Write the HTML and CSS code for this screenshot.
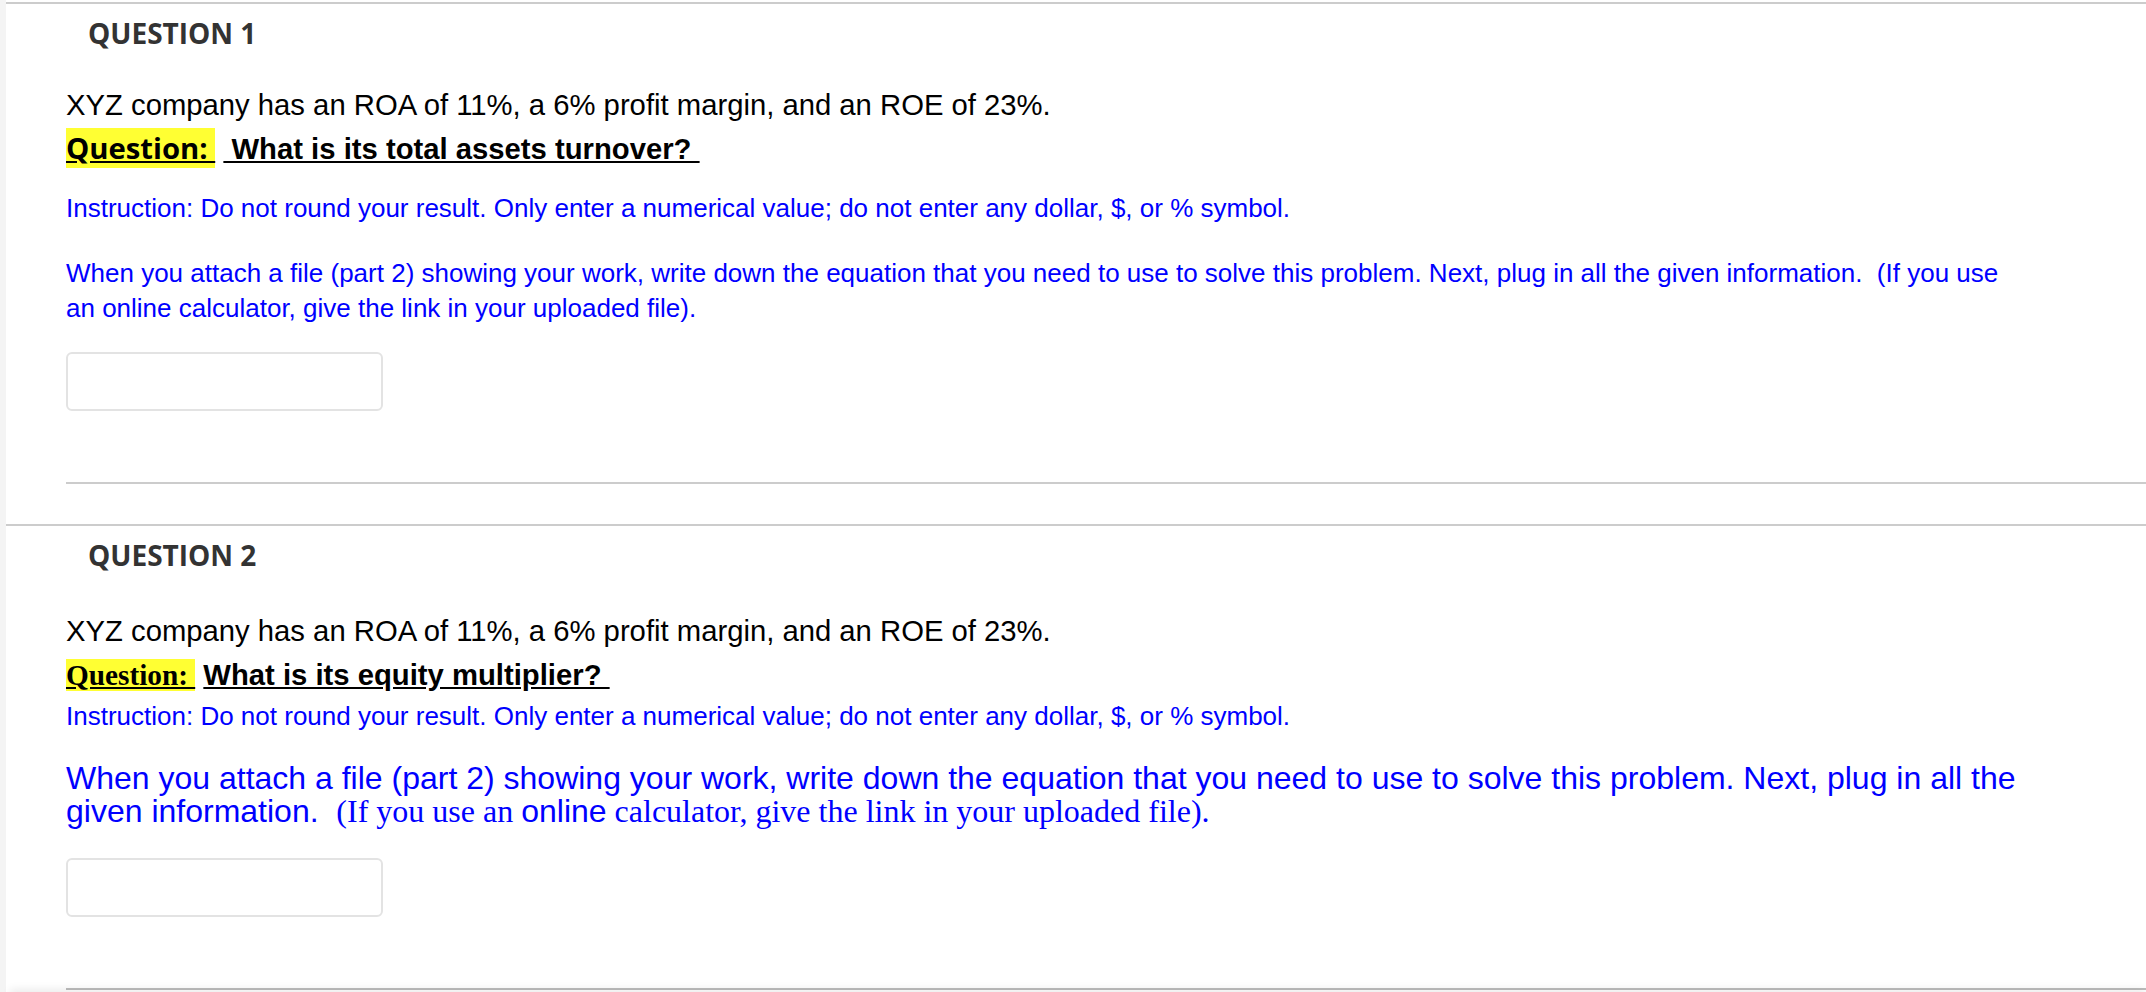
FILE: index.html
```html
<!DOCTYPE html>
<html lang="en">
<head>
<meta charset="utf-8">
<title>Questions</title>
<link rel="stylesheet" href="styles.css">
</head>
<body>
<div class="page">
  <section class="question q1">
    <h2 class="q-title">QUESTION 1</h2>
    <div class="q-body">
      <div class="q-content">
        <p class="stem">XYZ company has an ROA of 11%, a 6% profit margin, and an ROE of 23%.</p>
        <p class="ask"><span class="hl hl-sans">Question:&nbsp;</span> <span class="ask-text">&nbsp;What is its total assets turnover?&nbsp;</span></p>
        <p class="instr">Instruction: Do not round your result. Only enter a numerical value; do not enter any dollar, $, or % symbol.</p>
        <p class="work">When you attach a file (part 2) showing your work, write down the equation that you need to use to solve this problem. Next, plug in all the given information.&nbsp; (If you use an online calculator, give the link in your uploaded file).</p>
        <input class="answer" type="text" aria-label="Answer to question 1">
      </div>
      <div class="q-sep"></div>
    </div>
  </section>

  <section class="question q2">
    <h2 class="q-title">QUESTION 2</h2>
    <div class="q-body">
      <div class="q-content">
        <p class="stem">XYZ company has an ROA of 11%, a 6% profit margin, and an ROE of 23%.</p>
        <p class="ask"><span class="hl hl-serif">Question:&nbsp;</span> <span class="ask-text">What is its equity multiplier?&nbsp;</span></p>
        <p class="instr">Instruction: Do not round your result. Only enter a numerical value; do not enter any dollar, $, or % symbol.</p>
        <p class="work work-lg">When you attach a file (part 2) showing your work, write down the equation that you need to use to solve this problem. Next, plug in all the given information.&nbsp; <span class="serif">(If you use an </span>online<span class="serif"> calculator, give the link in your uploaded file).</span></p>
        <input class="answer" type="text" aria-label="Answer to question 2">
      </div>
      <div class="q-sep q-sep-dark"></div>
    </div>
  </section>
  <div class="next-card"></div>
</div>
</body>
</html>
```

FILE: styles.css
```css
html, body {
  margin: 0;
  padding: 0;
}

body {
  background: #f4f4f4;
  font-family: "Liberation Sans", Arial, sans-serif;
  color: #000;
  overflow: hidden;
}

.page {
  margin-left: 6px;
  padding-top: 2px;
  background: #fff;
  min-height: 1100px;
}

.question {
  border-top: 2px solid #cccccc;
}

.q2 {
  margin-top: 40px;
}

.q-title {
  margin: 9px 0 0 0;
  padding-left: 82px;
  font-family: "Open Sans", "Liberation Sans", sans-serif;
  font-weight: 700;
  font-size: 28px;
  line-height: 40px;
  color: #333333;
}

.q-body {
  padding-left: 60px;
}

.q-content {
  padding-right: 121px;
}

.q-content p {
  margin: 0;
}

.stem {
  font-size: 29.25px;
  line-height: 40px;
  margin-top: 32px !important;
}

.q2 .stem {
  margin-top: 36px !important;
}

.ask {
  font-size: 29.25px;
  line-height: 40px;
  font-weight: 700;
  margin-top: 3px !important;
}

.q2 .ask {
  margin-top: 4px !important;
}

.hl {
  background: #ffff33;
  text-decoration: underline;
}

.hl-sans {
  font-family: "Open Sans", "Liberation Sans", sans-serif;
}

.hl-serif {
  font-family: "Liberation Serif", "Times New Roman", serif;
}

.ask-text {
  text-decoration: underline;
}

.instr {
  font-size: 26px;
  line-height: 36px;
  color: #0000ff;
  margin-top: 21px !important;
}

.q2 .instr {
  margin-top: 3px !important;
}

.work {
  font-size: 26px;
  line-height: 35px;
  color: #0000ff;
  margin-top: 29.5px !important;
}

.work-lg {
  font-size: 32px;
  line-height: 33px;
  margin-top: 28px !important;
}

.serif {
  font-family: "Liberation Serif", "Times New Roman", serif;
}

.answer {
  display: block;
  box-sizing: border-box;
  width: 317px;
  height: 59px;
  margin: 26.5px 0 0 0;
  padding: 0 10px;
  border: 2px solid #e3e3e3;
  border-radius: 6px;
  background: #fff;
  font-size: 26px;
  outline: none;
}

.q2 .answer {
  margin-top: 29.5px;
}

.q-sep {
  margin-top: 71px;
  border-top: 2px solid #cccccc;
}

.q-sep-dark {
  border-top-color: #bdbdbd;
}

.next-card {
  margin: 2px 0 0 4px;
  height: 60px;
  background: #fff;
  box-shadow: 0 -3px 8px rgba(0, 0, 0, 0.08);
}
```
